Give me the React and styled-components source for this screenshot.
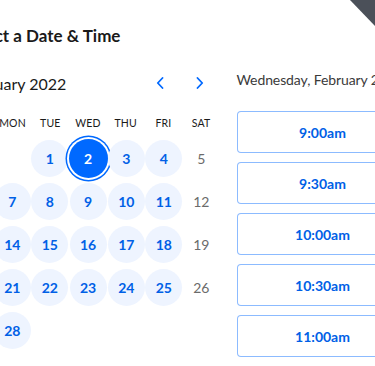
import React from "react";
import styled, { createGlobalStyle } from "styled-components";

const Global = createGlobalStyle`
  html, body { margin: 0; padding: 0; background: #ffffff; }
  body { font-family: Lato, "Open Sans", sans-serif; color: #1a1a1a; }
`;

const Page = styled.div`
  position: relative;
  width: 375px;
  height: 366px;
  overflow: hidden;
  background: #ffffff;
`;

const Corner = styled.div`
  position: absolute;
  top: 0;
  right: 0;
  width: 25px;
  height: 26px;
  background: #4b5059;
  clip-path: polygon(0 0, 100% 0, 100% 100%);
`;

const Shell = styled.div`
  margin-left: -44px;
  padding-top: 24px;
`;

const Title = styled.h2`
  margin: 0 0 15px 0;
  padding-left: 7px;
  height: 24px;
  line-height: 24px;
  font-size: 17px;
  font-weight: 700;
  color: #1a1a1a;
`;

const Body = styled.div`
  display: flex;
  align-items: flex-start;
  gap: 16px;
`;

const Calendar = styled.div`
  width: 264px;
  flex: none;
`;

const MonthRow = styled.div`
  display: flex;
  align-items: center;
  height: 40px;
  padding-left: 7px;
`;

const MonthLabel = styled.div`
  flex: 1;
  font-size: 16px;
  color: #1a1a1a;
`;

const NavButton = styled.button`
  width: 40px;
  height: 40px;
  border: none;
  background: transparent;
  padding: 0;
  display: flex;
  align-items: center;
  justify-content: center;
  color: #0069ff;
  cursor: pointer;
`;

const Grid = styled.div`
  display: grid;
  grid-template-columns: repeat(7, 1fr);
`;

const WeekRow = styled(Grid)`
  height: 26px;
  margin-top: 7px;
  align-items: center;
`;

const WeekDay = styled.div`
  text-align: center;
  font-size: 10.5px;
  color: #1a1a1a;
  letter-spacing: 0.2px;
`;

const DaysGrid = styled(Grid)`
  margin-top: 1px;
  grid-auto-rows: 43px;
`;

const Cell = styled.div`
  display: flex;
  align-items: center;
  justify-content: center;
`;

const Day = styled.div`
  width: 37px;
  height: 37px;
  border-radius: 50%;
  display: flex;
  align-items: center;
  justify-content: center;
  font-size: 14px;
  font-weight: ${(p) => (p.$available ? 700 : 400)};
  color: ${(p) => (p.$available ? "#0060e6" : "#6b6b6b")};
  background: ${(p) => (p.$available ? "#eef4ff" : "transparent")};
  ${(p) =>
    p.$selected &&
    `
    width: 39px;
    height: 39px;
    background: #0069ff;
    color: #ffffff;
    box-shadow: 0 0 0 2px #ffffff, 0 0 0 3.5px #0069ff;
  `}
`;

const Times = styled.div`
  width: 172px;
  flex: none;
  margin-left: 0.5px;
`;

const DateHeader = styled.div`
  height: 34px;
  line-height: 34px;
  font-size: 14px;
  color: #3a3a3a;
  white-space: nowrap;
  letter-spacing: -0.1px;
`;

const SlotList = styled.div`
  margin-top: 14px;
  display: flex;
  flex-direction: column;
  gap: 9px;
`;

const Slot = styled.button`
  height: 42px;
  width: 100%;
  border: 1px solid rgba(0, 105, 255, 0.45);
  border-radius: 4px;
  background: #ffffff;
  font-family: Lato, "Open Sans", sans-serif;
  font-size: 14px;
  font-weight: 700;
  color: #0060e6;
  cursor: pointer;
`;

const Chevron = ({ dir }) => (
  <svg width="8" height="12" viewBox="0 0 8 12" fill="none">
    <path
      d={dir === "left" ? "M6.5 1 L1.8 6 L6.5 11" : "M1.5 1 L6.2 6 L1.5 11"}
      stroke="currentColor"
      strokeWidth="1.8"
      strokeLinecap="round"
      strokeLinejoin="round"
    />
  </svg>
);

const weekdays = ["SUN", "MON", "TUE", "WED", "THU", "FRI", "SAT"];
const days = [null, null, ...Array.from({ length: 28 }, (_, i) => i + 1)];
const times = ["9:00am", "9:30am", "10:00am", "10:30am", "11:00am"];

export default function App() {
  return (
    <Page>
      <Global />
      <Shell>
        <Title>Select a Date &amp; Time</Title>
        <Body>
          <Calendar>
            <MonthRow>
              <MonthLabel>February 2022</MonthLabel>
              <NavButton aria-label="Previous month">
                <Chevron dir="left" />
              </NavButton>
              <NavButton aria-label="Next month">
                <Chevron dir="right" />
              </NavButton>
            </MonthRow>
            <WeekRow>
              {weekdays.map((w) => (
                <WeekDay key={w}>{w}</WeekDay>
              ))}
            </WeekRow>
            <DaysGrid>
              {days.map((d, i) => {
                if (d === null) return <Cell key={"e" + i} />;
                const dow = i % 7;
                const available = dow >= 1 && dow <= 5;
                return (
                  <Cell key={d}>
                    <Day $available={available} $selected={d === 2}>
                      {d}
                    </Day>
                  </Cell>
                );
              })}
            </DaysGrid>
          </Calendar>
          <Times>
            <DateHeader>Wednesday, February 2</DateHeader>
            <SlotList>
              {times.map((t) => (
                <Slot key={t}>{t}</Slot>
              ))}
            </SlotList>
          </Times>
        </Body>
      </Shell>
      <Corner />
    </Page>
  );
}
